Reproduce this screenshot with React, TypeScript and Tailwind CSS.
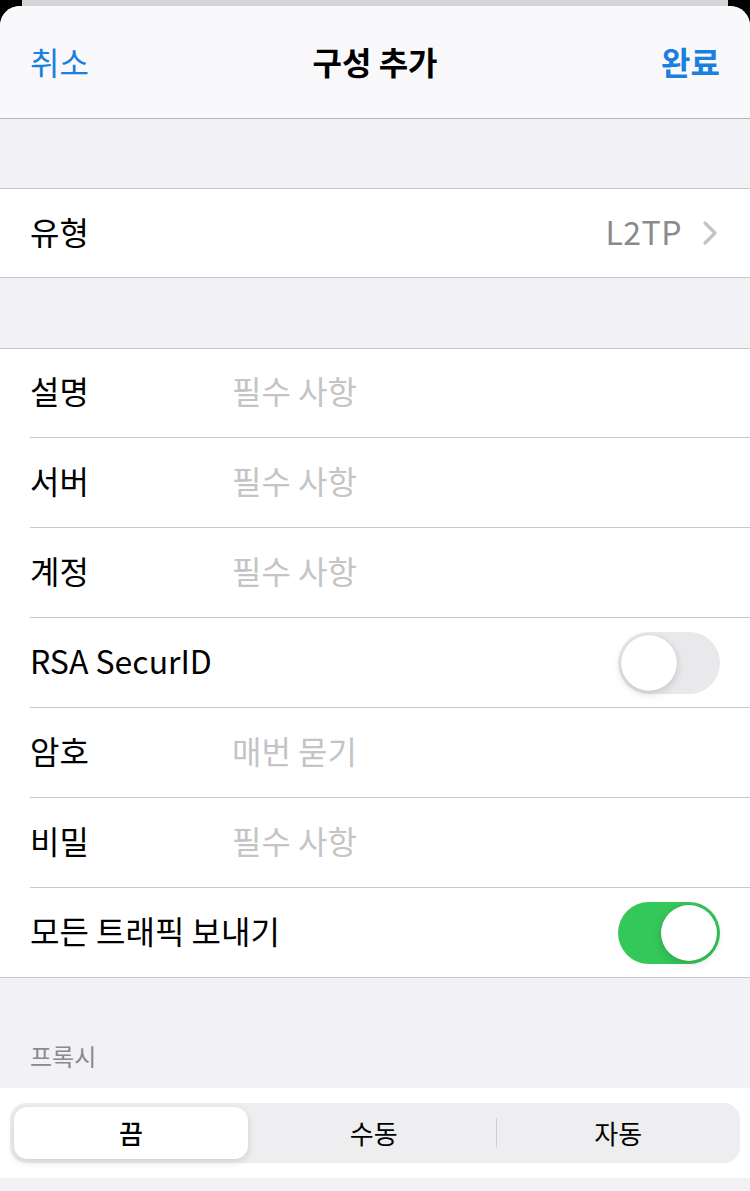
import React from "react";

const font = { fontFamily: '"Noto Sans CJK KR", "Noto Sans", sans-serif' };

const Toggle = ({ on }: { on: boolean }) => (
    <div
        className={`relative w-[102px] h-[62px] rounded-full ${
            on ? "bg-[#34c759]" : "bg-[#e9e9eb]"
        }`}
    >
        <div
            className={`absolute top-[3px] w-[56px] h-[56px] rounded-full bg-white shadow-[0_3px_8px_rgba(0,0,0,0.15),0_0_1px_rgba(0,0,0,0.2)] ${
                on ? "left-[43px]" : "left-[3px]"
            }`}
        ></div>
    </div>
);

const FieldRow = ({
    label,
    placeholder,
    first,
}: {
    label: string;
    placeholder: string;
    first?: boolean;
}) => (
    <div className="pl-[30px]">
        <div
            className={`flex items-center border-b border-[#c8c7cc] pb-[6px] ${
                first ? "h-[89px]" : "h-[90px]"
            }`}
        >
            <span className="w-[202px] text-[32px] text-black">{label}</span>
            <span className="text-[32px] text-[#c4c4c6]">{placeholder}</span>
        </div>
    </div>
);

const ToggleRow = ({ label, on, last }: { label: string; on: boolean; last?: boolean }) => (
    <div className="pl-[30px]">
        <div
            className={`flex items-center justify-between pr-[30px] ${
                last ? "h-[89px]" : "h-[90px] border-b border-[#c8c7cc]"
            }`}
        >
            <span className="text-[32px] text-black -mt-[6px]">{label}</span>
            <Toggle on={on} />
        </div>
    </div>
);

export default function App() {
    return (
        <div className="w-[750px] h-[1191px] bg-black overflow-hidden" style={font}>
            <div className="h-[6px] px-[22px]">
                <div className="h-full bg-[#d5d5d8]"></div>
            </div>
            <div className="rounded-t-[20px] bg-[#f1f1f6] overflow-hidden h-[1185px]">
                {/* nav bar */}
                <div className="h-[113px] bg-[#f9f9fb] border-b border-[#b5b5b9] flex items-center justify-between px-[30px] pb-[2px]">
                    <span className="text-[32px] text-[#1b7fe0] w-[100px]">취소</span>
                    <span className="text-[32px] font-bold text-black">구성 추가</span>
                    <span className="text-[32px] font-bold text-[#1b7fe0] w-[100px] text-right">
                        완료
                    </span>
                </div>

                <div className="h-[69px]"></div>

                <div className="bg-white border-y border-[#c8c7cc] h-[90px] flex items-center justify-between pl-[30px] pr-[32px] pb-[5px]">
                    <span className="text-[32px] text-black">유형</span>
                    <div className="flex items-center gap-[20px]">
                        <span className="text-[32px] text-[#8a8a8e] tracking-[0.5px]">L2TP</span>
                        <svg width="16" height="26" viewBox="0 0 16 26" className="mt-[4px]">
                            <path
                                d="M3 3 L13 13 L3 23"
                                fill="none"
                                stroke="#c4c4c7"
                                strokeWidth="3.2"
                                strokeLinecap="round"
                                strokeLinejoin="round"
                            />
                        </svg>
                    </div>
                </div>

                <div className="h-[70px]"></div>

                <div className="bg-white border-y border-[#c8c7cc]">
                    <FieldRow label="설명" placeholder="필수 사항" first />
                    <FieldRow label="서버" placeholder="필수 사항" />
                    <FieldRow label="계정" placeholder="필수 사항" />
                    <ToggleRow label="RSA SecurID" on={false} />
                    <FieldRow label="암호" placeholder="매번 묻기" />
                    <FieldRow label="비밀" placeholder="필수 사항" />
                    <ToggleRow label="모든 트래픽 보내기" on={true} last />
                </div>

                <div className="h-[110px] flex items-end pl-[30px] pb-[14px]">
                    <span className="text-[24px] text-[#8a8a8e]">프록시</span>
                </div>

                <div className="bg-white h-[90px] px-[10px] flex items-center">
                    <div className="w-full h-[60px] rounded-[16px] bg-[#eeeef0] flex items-center">
                        <div className="w-[242px] h-full p-[4px]">
                            <div className="w-full h-full rounded-[13px] bg-white shadow-[0_3px_8px_rgba(0,0,0,0.12),0_0_1px_rgba(0,0,0,0.1)] flex items-center justify-center">
                                <span className="text-[26px] font-medium text-black -mt-[2px]">끔</span>
                            </div>
                        </div>
                        <div className="flex-1 flex items-center justify-center">
                            <span className="text-[26px] text-black -mt-[2px]">수동</span>
                        </div>
                        <div className="w-px h-[30px] bg-[#d0d0d4]"></div>
                        <div className="flex-1 flex items-center justify-center">
                            <span className="text-[26px] text-black -mt-[2px]">자동</span>
                        </div>
                    </div>
                </div>
            </div>
        </div>
    );
}
